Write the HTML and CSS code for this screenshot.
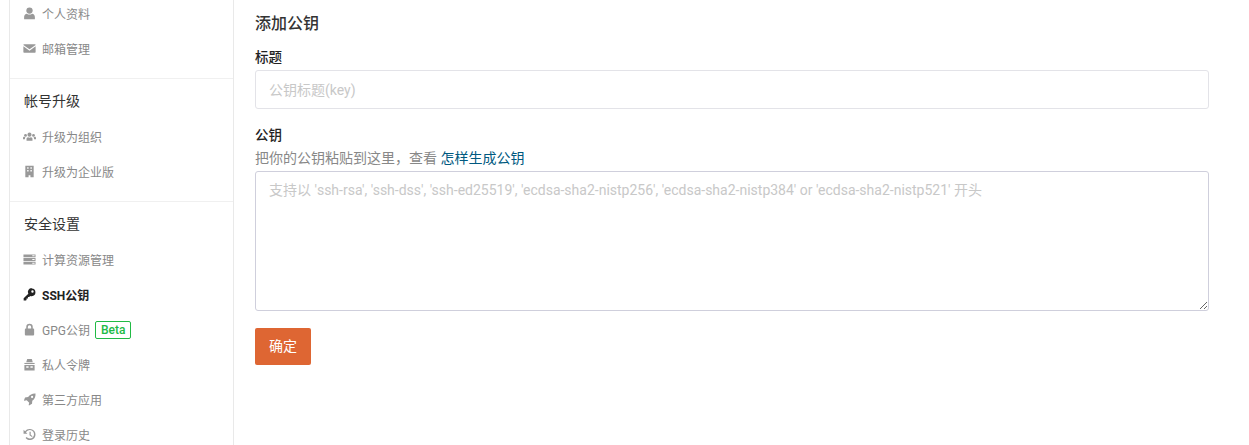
FILE: index.html
```html
<!DOCTYPE html>
<html lang="zh-CN">
<head>
    <meta charset="UTF-8">
    <meta name="viewport" content="width=device-width, initial-scale=1.0">
    <title>SSH公钥</title>
    <link rel="stylesheet" href="styles.css">
</head>
<body>
    <div class="page">
        <aside class="sidebar">
            <a class="item" href="#">
                <svg class="icon" viewBox="0 0 14 14"><circle cx="7" cy="3.9" r="3.4"/><path d="M1.2 13.2v-2.4c0-2 1.3-3.3 3-3.5.8.6 1.7.9 2.8.9s2-.3 2.8-.9c1.700.2 3 1.500 3 3.500v2.400z"/></svg>
                个人资料
            </a>
            <a class="item" href="#">
                <svg class="icon" viewBox="0 0 14 14"><path d="M1 2.500h12c.3 0 .6.300.6.600L7 7.800.4 3.100c0-.3.300-.6.600-.6z"/><path d="M.4 4.700 7 9.400l6.600-4.700v6.200c0 .4-.3.700-.7.700H1.100c-.4 0-.7-.3-.7-.7z"/></svg>
                邮箱管理
            </a>
            <div class="divider"></div>
            <div class="header">帐号升级</div>
            <a class="item" href="#">
                <svg class="icon" viewBox="0 0 14 14"><circle cx="7" cy="5" r="2.200"/><circle cx="2.700" cy="5.900" r="1.500"/><circle cx="11.300" cy="5.900" r="1.500"/><path d="M3.800 11.500V9.600c0-1 .7-1.800 1.600-1.800.5.300 1 .5 1.600.5s1.100-.2 1.600-.5c.9 0 1.600.8 1.600 1.800v1.900z"/><path d="M0 10V8.600c0-.7.500-1.200 1.200-1.200.4.300.9.400 1.400.4-.3.400-.5.900-.5 1.500V10zM14 10V8.600c0-.7-.5-1.200-1.200-1.200-.4.300-.9.400-1.400.4.300.4.500.9.500 1.500V10z"/></svg>
                升级为组织
            </a>
            <a class="item" href="#">
                <svg class="icon" viewBox="0 0 14 14"><path fill-rule="evenodd" d="M2.500.8h9v12.400H8V11H6v2.200H2.500zM4.500 2.500v1.500h1.500V2.500zM8 2.500v1.500h1.500V2.500zM4.500 5.500V7h1.500V5.500zM8 5.500V7h1.500V5.500z"/></svg>
                升级为企业版
            </a>
            <div class="divider"></div>
            <div class="header">安全设置</div>
            <a class="item" href="#">
                <svg class="icon" viewBox="0 0 14 14"><path fill-rule="evenodd" d="M.5 1.500h13v3h-13zM.5 5.500h13v3h-13zM.5 9.500h13v3h-13zM10 2.500v1h2.500v-1zM10 6.500v1h2.500v-1zM10 10.500v1h2.500v-1z"/></svg>
                计算资源管理
            </a>
            <a class="item active" href="#">
                <svg class="icon" viewBox="0 0 14 14"><path fill-rule="evenodd" d="M9.300.6a4.100 4.100 0 0 1 0 8.200c-.5 0-1-.1-1.400-.3L6.600 9.800H5.300v1.500H3.800v1.500l-.6.600H.7v-2.300l5-5a4.100 4.100 0 0 1 3.600-6zm.9 1.800a1.300 1.300 0 1 0 0 2.600 1.300 1.300 0 0 0 0-2.600z"/></svg>
                SSH公钥
            </a>
            <a class="item" href="#">
                <svg class="icon" viewBox="0 0 14 14"><path fill-rule="evenodd" d="M3.500 6V4.200a3.500 3.500 0 0 1 7 0V6h.5c.6 0 1 .4 1 1v5.500c0 .6-.4 1-1 1H3c-.6 0-1-.4-1-1V7c0-.6.400-1 1-1zm1.700 0h3.600V4.200a1.800 1.800 0 0 0-3.600 0z"/></svg>
                GPG公钥
                <span class="badge">Beta</span>
            </a>
            <a class="item" href="#">
                <svg class="icon" viewBox="0 0 14 14"><path d="M4.500 1h5l1 3.500h-7z"/><path d="M1.500 5.300h11v1.200h-11z"/><path fill-rule="evenodd" d="M1.500 7.500h11v6h-11zM3.500 9v1.500h2.500V9zM8 9v1.500h2.500V9z"/></svg>
                私人令牌
            </a>
            <a class="item" href="#">
                <svg class="icon" viewBox="0 0 14 14"><path fill-rule="evenodd" d="M13.500.5c.2 3.500-1 6-3.500 7.900l-.3 3.300-3.200 1.800-.4-.6.600-2.400-2.700-2.700-2.400.6-.6-.4L2.200 4.800l3.300-.4C7.500 1.700 10 .3 13.500.5zM9.800 3a1.200 1.200 0 1 0 0 2.400 1.200 1.200 0 0 0 0-2.400z"/></svg>
                第三方应用
            </a>
            <a class="item" href="#">
                <svg class="icon" viewBox="0 0 14 14"><path d="M7.500 1a6 6 0 1 1-4.700 9.800l1-1a4.600 4.600 0 1 0-.6-5.200l1.600 1.600H.6V1.900l1.600 1.600A6 6 0 0 1 7.500 1z"/><path d="M7 4h1.300v3.300l2 1.500-.7 1L7 7.900z"/></svg>
                登录历史
            </a>
        </aside>

        <main class="content">
            <h2 class="title">添加公钥</h2>
            <form>
                <div class="field">
                    <label for="keyTitle">标题</label>
                    <input type="text" id="keyTitle" placeholder="公钥标题(key)">
                </div>
                <div class="field field-last">
                    <label for="keyContent">公钥</label>
                    <p class="hint">把你的公钥粘贴到这里，查看 <a href="#">怎样生成公钥</a></p>
                    <textarea id="keyContent" placeholder="支持以 'ssh-rsa', 'ssh-dss', 'ssh-ed25519', 'ecdsa-sha2-nistp256', 'ecdsa-sha2-nistp384' or 'ecdsa-sha2-nistp521' 开头"></textarea>
                </div>
                <button type="submit" class="submit">确定</button>
            </form>
        </main>
    </div>
</body>
</html>
```

FILE: styles.css
```css
html, body {
    margin: 0;
    height: 100%;
    overflow: hidden;
    background-color: #fff;
}
body {
    font-family: Roboto, "Noto Sans CJK SC", sans-serif;
    font-size: 14px;
    color: #333;
}
.page {
    display: flex;
    height: 445px;
    padding-left: 9px;
    box-sizing: border-box;
    overflow: hidden;
}

/* 左侧菜单 */
.sidebar {
    flex: none;
    width: 225px;
    height: 480px;
    margin-top: -4px;
    border-left: 1px solid #e9e9e9;
    border-right: 1px solid #e9e9e9;
    box-sizing: border-box;
}
.item {
    display: flex;
    align-items: center;
    height: 35px;
    padding-left: 13px;
    font-size: 12px;
    color: #888;
    text-decoration: none;
}
.item.active {
    color: #222;
    font-weight: bold;
}
.icon {
    flex: none;
    width: 13px;
    height: 13px;
    margin-right: 6px;
    fill: currentColor;
}
.item:not(.active) .icon {
    fill: #999;
}
.divider {
    height: 1px;
    margin-top: 12px;
    background-color: #f0f0f0;
}
.header {
    height: 36px;
    margin-top: 4px;
    padding-left: 14px;
    font-size: 14px;
    line-height: 37px;
    color: #333;
}
.badge {
    margin-left: 5px;
    padding: 0 5px;
    border: 1px solid #21ba45;
    border-radius: 2px;
    font-size: 12px;
    font-weight: 500;
    line-height: 16px;
    color: #21ba45;
}

/* 表单 */
.content {
    flex: 1;
    padding: 13px 40px 0 21px;
}
.title {
    margin: 0 0 12px;
    font-size: 16px;
    font-weight: 500;
    line-height: 22px;
    color: #333;
}
.field {
    margin-bottom: 16px;
}
.field-last {
    margin-bottom: 17px;
}
.field label {
    display: block;
    margin-bottom: 3px;
    font-size: 13.500px;
    font-weight: 500;
    line-height: 20px;
    color: #222;
}
input, textarea {
    display: block;
    width: 100%;
    padding: 0 13px;
    border: 1px solid #e3e3e8;
    border-radius: 3px;
    box-sizing: border-box;
    font-family: inherit;
    font-size: 14px;
    color: #333;
    outline: none;
}
input {
    height: 39px;
}
textarea {
    height: 140px;
    padding-top: 8px;
    border-color: #cfcfdc;
    line-height: 20px;
}
::placeholder {
    color: #c8c8c8;
    opacity: 1;
}
.hint {
    margin: 0 0 3px;
    line-height: 20px;
    color: #888;
}
.hint a {
    color: #005980;
    text-decoration: none;
}
.submit {
    display: block;
    width: 56px;
    height: 37px;
    padding: 0 0 3px;
    border: none;
    border-radius: 2px;
    background-color: #de6633;
    font-family: inherit;
    font-size: 14px;
    color: #fff;
}
```
